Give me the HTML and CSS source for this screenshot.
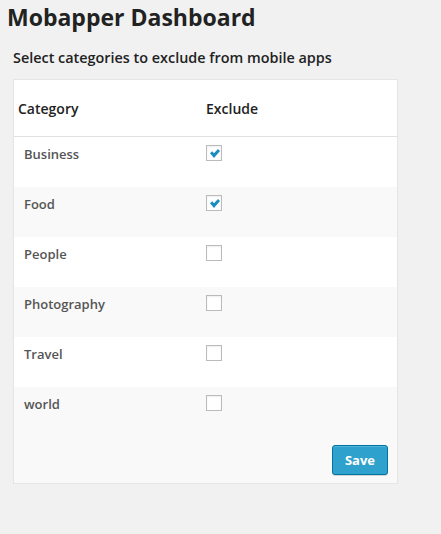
FILE: index.html
```html
<!DOCTYPE html>
<html>
<head>
<meta charset="utf-8">
<link rel="stylesheet" href="styles.css">
</head>
<body>
<div class="wrap">
  <h2 class="title">Mobapper Dashboard</h2>
  <h3 class="subtitle">Select categories to exclude from mobile apps</h3>
  <form class="card">
    <div class="row head">
      <div class="cell name">Category</div>
      <div class="cell">Exclude</div>
    </div>
    <div class="row">
      <div class="cell name">Business</div>
      <div class="cell"><span class="cb checked"></span></div>
    </div>
    <div class="row alt">
      <div class="cell name">Food</div>
      <div class="cell"><span class="cb checked"></span></div>
    </div>
    <div class="row">
      <div class="cell name">People</div>
      <div class="cell"><span class="cb"></span></div>
    </div>
    <div class="row alt">
      <div class="cell name">Photography</div>
      <div class="cell"><span class="cb"></span></div>
    </div>
    <div class="row">
      <div class="cell name">Travel</div>
      <div class="cell"><span class="cb"></span></div>
    </div>
    <div class="row alt">
      <div class="cell name">world</div>
      <div class="cell"><span class="cb"></span></div>
    </div>
    <div class="footer">
      <button type="button" class="btn">Save</button>
    </div>
  </form>
</div>
</body>
</html>
```
FILE: styles.css
```css
html, body {
  margin: 0;
  padding: 0;
  background: #f1f1f1;
}
body {
  font-family: "Open Sans", "Liberation Sans", sans-serif;
  color: #222;
}
.wrap {
  padding: 0 0 0 7px;
}
.title {
  margin: 0;
  padding-top: 3px;
  font-size: 23px;
  font-weight: 700;
  line-height: 29px;
  color: #222;
}
.subtitle {
  margin: 16px 0 0 6px;
  font-size: 14.4px;
  font-weight: 600;
  line-height: 20px;
  color: #222;
}
.card {
  margin: 11px 0 0 6px;
  width: 383px;
  background: #f9f9f9;
  border: 1px solid #e5e5e5;
  box-shadow: 0 1px 1px rgba(0,0,0,0.04);
}
.row {
  display: grid;
  grid-template-columns: 192px 1fr;
  height: 50px;
  background: #fff;
}
.row.alt {
  background: #f9f9f9;
}
.row.head {
  height: 56px;
  border-bottom: 1px solid #e1e1e1;
  align-items: center;
}
.row.head .name {
  padding: 0 0 0 4px;
}
.cell {
  padding-top: 8px;
  font-size: 13px;
  font-weight: 600;
  line-height: 18px;
  color: #555;
}
.row.head .cell {
  padding-top: 1px;
  font-size: 14px;
  color: #222;
}
.cell.name {
  padding-left: 10px;
}
.cb {
  display: block;
  box-sizing: border-box;
  width: 16px;
  height: 16px;
  border: 1px solid #bbb;
  background: #fff;
  box-shadow: inset 0 1px 2px rgba(0,0,0,0.07);
  position: relative;
}
.cb.checked::after {
  content: "";
  position: absolute;
  left: 3px;
  top: 3px;
  width: 10px;
  height: 9px;
  background: #1e8cbe;
  clip-path: polygon(0% 48%, 22% 26%, 40% 46%, 80% 0%, 100% 22%, 40% 100%);
}
.footer {
  display: flex;
  justify-content: flex-end;
  padding: 8px 9px 8px 0;
}
.btn {
  box-sizing: border-box;
  width: 56px;
  height: 30px;
  padding: 0;
  background: #2ea2cc;
  border: 1px solid #0074a2;
  border-radius: 3px;
  box-shadow: inset 0 1px 0 rgba(120,200,230,0.5), 0 1px 0 rgba(0,0,0,0.15);
  color: #fff;
  font-family: "Open Sans", "Liberation Sans", sans-serif;
  font-size: 13px;
  font-weight: 700;
}
```
